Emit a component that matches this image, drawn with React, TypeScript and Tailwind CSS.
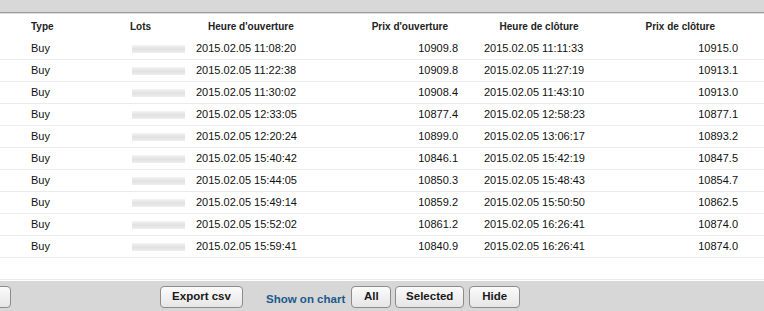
import React from "react";

const rows = [
  ["2015.02.05 11:08:20", "10909.8", "2015.02.05 11:11:33", "10915.0"],
  ["2015.02.05 11:22:38", "10909.8", "2015.02.05 11:27:19", "10913.1"],
  ["2015.02.05 11:30:02", "10908.4", "2015.02.05 11:43:10", "10913.0"],
  ["2015.02.05 12:33:05", "10877.4", "2015.02.05 12:58:23", "10877.1"],
  ["2015.02.05 12:20:24", "10899.0", "2015.02.05 13:06:17", "10893.2"],
  ["2015.02.05 15:40:42", "10846.1", "2015.02.05 15:42:19", "10847.5"],
  ["2015.02.05 15:44:05", "10850.3", "2015.02.05 15:48:43", "10854.7"],
  ["2015.02.05 15:49:14", "10859.2", "2015.02.05 15:50:50", "10862.5"],
  ["2015.02.05 15:52:02", "10861.2", "2015.02.05 16:26:41", "10874.0"],
  ["2015.02.05 15:59:41", "10840.9", "2015.02.05 16:26:41", "10874.0"],
];

const btn =
  "h-[22px] rounded-[4px] border border-[#8c8c8c] bg-gradient-to-b from-[#fbfbfb] to-[#e6e6e6] font-bold text-[11.5px] text-[#1a1a1a] leading-none";

export default function App() {
  return (
    <div
      className="w-[764px] h-[311px] overflow-hidden bg-white flex flex-col"
      style={{ fontFamily: '"Liberation Sans", Arial, sans-serif' }}
    >
      <div className="h-[13px] bg-[#d8d8d8] border-b border-[#9c9c9c] shrink-0" />
      <div className="h-[1px] bg-[#dcdcdc] shrink-0" />
      {/* header */}
      <div className="flex h-[24px] items-center text-[10px] font-bold text-[#222] shrink-0">
        <div className="w-[31px]" />
        <div className="w-[99px]">Type</div>
        <div className="w-[66px]">Lots</div>
        <div className="w-[140px] pl-[12px]">Heure d'ouverture</div>
        <div className="w-[122px] text-right pr-[10px]">Prix d'ouverture</div>
        <div className="w-[26px]" />
        <div className="w-[110px] text-center">Heure de clôture</div>
        <div className="w-[144px] text-right pr-[23px]">Prix de clôture</div>
      </div>
      {rows.map((r, i) => (
        <div
          key={i}
          className="flex h-[22px] items-center border-b border-[#ebebeb] text-[11px] text-[#111] shrink-0"
        >
          <div className="w-[31px]" />
          <div className="w-[99px]">Buy</div>
          <div className="w-[66px]">
            <div className="ml-[2px] w-[53px] h-[8px] bg-gradient-to-b from-[#f4f4f4] via-[#e1e1e1] to-[#eeeeee]" />
          </div>
          <div className="w-[140px]">{r[0]}</div>
          <div className="w-[122px] text-right">{r[1]}</div>
          <div className="w-[26px]" />
          <div className="w-[110px]">{r[2]}</div>
          <div className="w-[144px] text-right">{r[3]}</div>
        </div>
      ))}
      <div className="h-[22px] border-b border-[#ebebeb] shrink-0" />
      <div className="h-[1px] shrink-0" />
      <div className="flex-1 bg-[#d7d7d7] flex items-start pt-[5px]">
        <button className={`${btn} w-[51px] ml-[-40px]`} />
        <button className={`${btn} w-[83px] ml-[149px]`}>Export csv</button>
        <span className="ml-[23px] mt-[5px] text-[11.5px] font-bold text-[#1d5a8c]">Show on chart</span>
        <button className={`${btn} w-[40px] ml-[6px]`}>All</button>
        <button className={`${btn} w-[69px] ml-[4px]`}>Selected</button>
        <button className={`${btn} w-[51px] ml-[5px]`}>Hide</button>
      </div>
    </div>
  );
}
